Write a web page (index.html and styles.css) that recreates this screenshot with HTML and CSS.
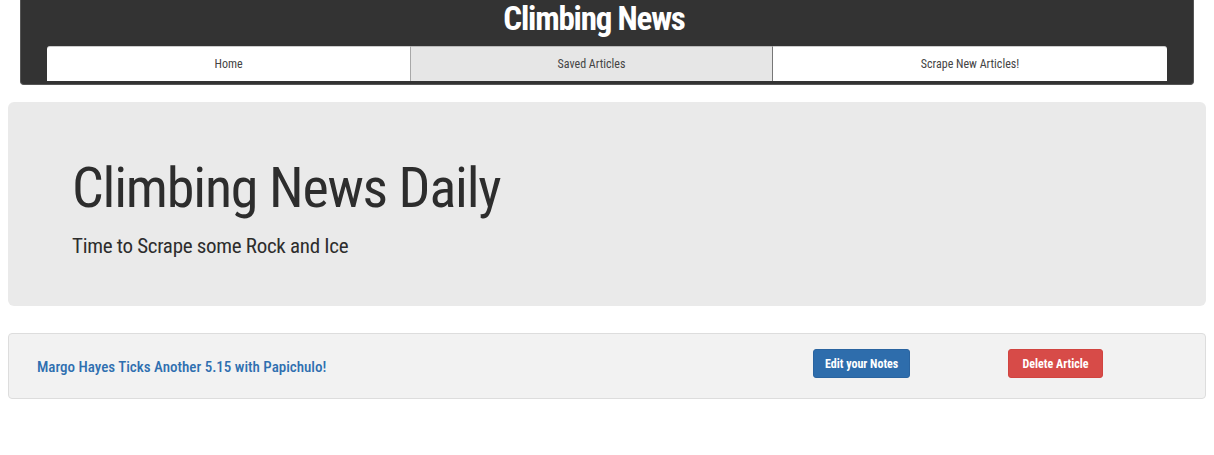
FILE: index.html
```html
<!DOCTYPE html>
<html lang="en">
<head>
<meta charset="utf-8">
<title>Climbing News</title>
<link rel="stylesheet" href="styles.css">
</head>
<body>
  <header class="site-header">
    <h1 class="brand">Climbing News</h1>
    <nav class="tabs">
      <a class="tab tab-first" href="#">Home</a>
      <a class="tab tab-active" href="#">Saved Articles</a>
      <a class="tab tab-last" href="#">Scrape New Articles!</a>
    </nav>
  </header>

  <section class="jumbotron">
    <h2 class="jumbo-title">Climbing News Daily</h2>
    <p class="jumbo-sub">Time to Scrape some Rock and Ice</p>
  </section>

  <article class="article-card">
    <a class="article-link" href="#">Margo Hayes Ticks Another 5.15 with Papichulo!</a>
    <div class="article-action"><button class="btn btn-blue">Edit your Notes</button></div>
    <div class="article-action"><button class="btn btn-red">Delete Article</button></div>
  </article>
</body>
</html>
```

FILE: styles.css
```css
* { box-sizing: border-box; }

body {
  margin: 0 8px 8px;
  font-family: "Roboto Condensed", Roboto, "Liberation Sans", sans-serif;
  font-stretch: condensed;
  color: #333;
  background: #fff;
}

.site-header {
  margin: 0 12px;
  background: #333;
  border: 1px solid #555;
  border-top: 0;
  border-radius: 0 0 4px 4px;
  padding: 0 26px 3px;
}

.brand {
  margin: 0;
  height: 46px;
  padding: 1px 26px 0 0;
  text-align: center;
  color: #fff;
  font-weight: 700;
  font-size: 33px;
  line-height: 36px;
  letter-spacing: -1.2px;
}

.tabs {
  display: flex;
  height: 35px;
}

.tab {
  display: flex;
  align-items: center;
  justify-content: center;
  text-decoration: none;
  color: #444;
  font-size: 12px;
  background: #fff;
  border-top: 1px solid #ccc;
  padding-bottom: 1px;
}

.tab-first { flex: 0 0 363px; border-radius: 3px 0 0 0; }
.tab-active {
  flex: 0 0 363px;
  background: #e6e6e6;
  border-left: 1px solid #a8a8a8;
  border-right: 1px solid #777;
  border-top: 1px solid #bbb;
}
.tab-last { flex: 1 1 auto; border-radius: 0 3px 0 0; }

.jumbotron {
  margin-top: 17px;
  background: #eaeaea;
  border-radius: 6px;
  padding: 54px 64px 45px;
}

.jumbo-title {
  margin: 0;
  font-weight: 400;
  font-size: 56px;
  line-height: 64px;
  letter-spacing: -1.2px;
  color: #2d2d2d;
}

.jumbo-sub {
  margin: 12px 0 0;
  font-size: 21px;
  line-height: 29px;
  letter-spacing: -0.3px;
  color: #2d2d2d;
}

.article-card {
  margin-top: 27px;
  height: 66px;
  background: #f2f2f2;
  border: 1px solid #ddd;
  border-radius: 4px;
  padding: 0 102px 0 28px;
  display: grid;
  grid-template-columns: 1fr 195px 95px;
  align-items: center;
}

.article-link {
  color: #2e6fb0;
  font-size: 15px;
  font-weight: 500;
  text-decoration: none;
  padding-top: 2px;
}

.article-action { display: flex; }

.btn {
  border: 1px solid transparent;
  border-radius: 3px;
  height: 29px;
  margin-bottom: 5px;
  padding: 0 11px;
  font-family: inherit;
  font-stretch: condensed;
  font-size: 12px;
  font-weight: 700;
  color: #fff;
  cursor: pointer;
}
.btn-blue { background: #2e6dac; border-color: #2a64a0; }
.btn-red { background: #d74b48; border-color: #d14440; min-width: 95px; }
```
